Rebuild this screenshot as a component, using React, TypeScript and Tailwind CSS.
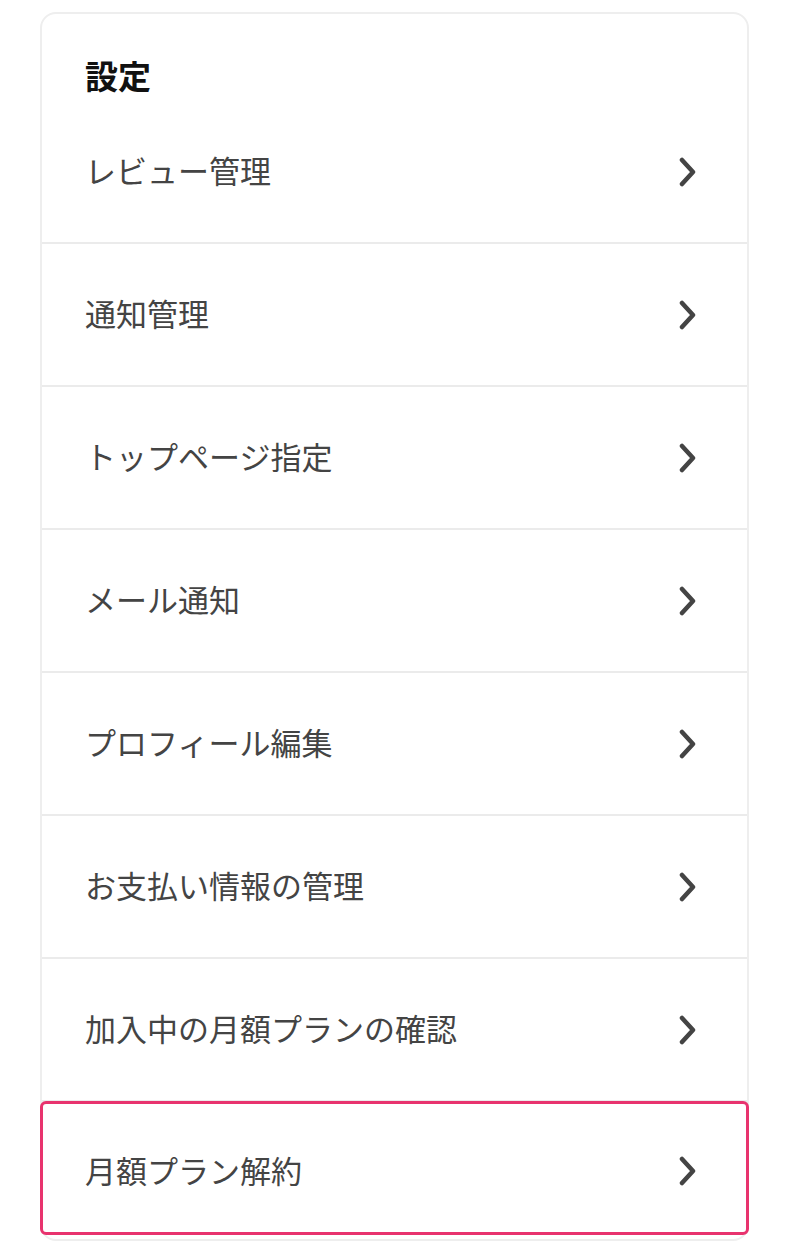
const items = [
  "レビュー管理",
  "通知管理",
  "トップページ指定",
  "メール通知",
  "プロフィール編集",
  "お支払い情報の管理",
  "加入中の月額プランの確認",
];

function Chevron() {
  return (
    <svg width="18" height="30" viewBox="0 0 18 30" fill="none" className="shrink-0">
      <polyline
        points="3,3 14,15 3,27"
        stroke="#444444"
        strokeWidth="4.5"
        strokeLinecap="round"
        strokeLinejoin="round"
      />
    </svg>
  );
}

export default function App() {
  return (
    <div
      className="min-h-[1250px] bg-white pt-[12px]"
      style={{ fontFamily: '"Noto Sans CJK JP", "Noto Sans", sans-serif' }}
    >
      <div className="ml-[40px] w-[709px] rounded-2xl border-2 border-[#eeeeee] bg-white pb-[4px]">
        <div className="pl-[43px] pt-[41px] pb-[6px]">
          <h1 className="text-[33px] font-bold leading-[40px] text-[#111111]">設定</h1>
        </div>

        {items.map((label) => (
          <div
            key={label}
            className="flex h-[143px] items-center justify-between border-b-2 border-[#ebebeb] pl-[43px] pr-[50px]"
          >
            <span className="pb-[3px] text-[31px] leading-[40px] text-[#444444]">{label}</span>
            <Chevron />
          </div>
        ))}

        <div className="-mx-[2px] -mt-[1px] flex h-[134px] items-center justify-between rounded-md border-[3px] border-[#e8336e] pl-[42px] pr-[49px] pt-[6px]">
          <span className="pb-[3px] text-[31px] leading-[40px] text-[#444444]">月額プラン解約</span>
          <Chevron />
        </div>
      </div>
    </div>
  );
}
